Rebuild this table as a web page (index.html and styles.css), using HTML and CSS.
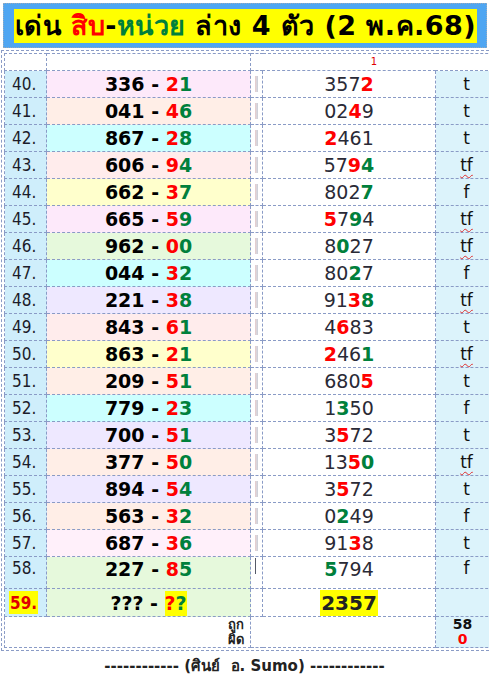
FILE: index.html
```html
<!DOCTYPE html>
<html lang="th">
<head>
<meta charset="utf-8">
<title>เด่น สิบ-หน่วย ล่าง 4 ตัว</title>
<link rel="stylesheet" href="styles.css">
</head>
<body>
<div class="page">
  <header class="banner">
    <h1 class="title">เด่น <span class="r">สิบ</span>-<span class="g">หน่วย</span> ล่าง 4 ตัว (2 พ.ค.68)</h1>
  </header>
  <div class="frame">
    <table class="grid">
      <colgroup><col class="c-no"><col class="c-pair"><col class="c-sep"><col class="c-res"><col class="c-tf"></colgroup>
      <tr class="head"><td></td><td></td><td colspan="3" class="mark">1</td></tr>
      <tr><td class="no">40.</td><td class="pair bg-pink">336 - <b class="r">2</b><b class="g">1</b></td><td class="sep"><i class="bar"></i></td><td class="res">357<b class="r">2</b></td><td class="tf">t</td></tr>
      <tr><td class="no">41.</td><td class="pair bg-peach">041 - <b class="r">4</b><b class="g">6</b></td><td class="sep"><i class="bar"></i></td><td class="res">02<b class="r">4</b>9</td><td class="tf">t</td></tr>
      <tr><td class="no">42.</td><td class="pair bg-cyan">867 - <b class="r">2</b><b class="g">8</b></td><td class="sep"><i class="bar"></i></td><td class="res"><b class="r">2</b>461</td><td class="tf">t</td></tr>
      <tr><td class="no">43.</td><td class="pair bg-rose">606 - <b class="r">9</b><b class="g">4</b></td><td class="sep"><i class="bar"></i></td><td class="res">57<b class="r">9</b><b class="g">4</b></td><td class="tf"><u>tf</u></td></tr>
      <tr><td class="no">44.</td><td class="pair bg-yellow">662 - <b class="r">3</b><b class="g">7</b></td><td class="sep"><i class="bar"></i></td><td class="res">802<b class="g">7</b></td><td class="tf">f</td></tr>
      <tr><td class="no">45.</td><td class="pair bg-pink">665 - <b class="r">5</b><b class="g">9</b></td><td class="sep"><i class="bar"></i></td><td class="res"><b class="r">5</b>7<b class="g">9</b>4</td><td class="tf"><u>tf</u></td></tr>
      <tr><td class="no">46.</td><td class="pair bg-green">962 - <b class="r">0</b><b class="g">0</b></td><td class="sep"><i class="bar"></i></td><td class="res">8<b class="g">0</b>27</td><td class="tf"><u>tf</u></td></tr>
      <tr><td class="no">47.</td><td class="pair bg-cyan">044 - <b class="r">3</b><b class="g">2</b></td><td class="sep"><i class="bar"></i></td><td class="res">80<b class="g">2</b>7</td><td class="tf">f</td></tr>
      <tr><td class="no">48.</td><td class="pair bg-lav">221 - <b class="r">3</b><b class="g">8</b></td><td class="sep"><i class="bar"></i></td><td class="res">91<b class="r">3</b><b class="g">8</b></td><td class="tf"><u>tf</u></td></tr>
      <tr><td class="no">49.</td><td class="pair bg-rose">843 - <b class="r">6</b><b class="g">1</b></td><td class="sep"><i class="bar"></i></td><td class="res">4<b class="r">6</b>83</td><td class="tf">t</td></tr>
      <tr><td class="no">50.</td><td class="pair bg-yellow">863 - <b class="r">2</b><b class="g">1</b></td><td class="sep"><i class="bar"></i></td><td class="res"><b class="r">2</b>46<b class="g">1</b></td><td class="tf"><u>tf</u></td></tr>
      <tr><td class="no">51.</td><td class="pair bg-peach">209 - <b class="r">5</b><b class="g">1</b></td><td class="sep"><i class="bar"></i></td><td class="res">680<b class="r">5</b></td><td class="tf">t</td></tr>
      <tr><td class="no">52.</td><td class="pair bg-cyan">779 - <b class="r">2</b><b class="g">3</b></td><td class="sep"><i class="bar"></i></td><td class="res">1<b class="g">3</b>50</td><td class="tf">f</td></tr>
      <tr><td class="no">53.</td><td class="pair bg-lav">700 - <b class="r">5</b><b class="g">1</b></td><td class="sep"><i class="bar"></i></td><td class="res">3<b class="r">5</b>72</td><td class="tf">t</td></tr>
      <tr><td class="no">54.</td><td class="pair bg-peach">377 - <b class="r">5</b><b class="g">0</b></td><td class="sep"><i class="bar"></i></td><td class="res">13<b class="r">5</b><b class="g">0</b></td><td class="tf"><u>tf</u></td></tr>
      <tr><td class="no">55.</td><td class="pair bg-lav">894 - <b class="r">5</b><b class="g">4</b></td><td class="sep"><i class="bar"></i></td><td class="res">3<b class="r">5</b>72</td><td class="tf">t</td></tr>
      <tr><td class="no">56.</td><td class="pair bg-peach">563 - <b class="r">3</b><b class="g">2</b></td><td class="sep"><i class="bar"></i></td><td class="res">0<b class="g">2</b>49</td><td class="tf">f</td></tr>
      <tr><td class="no">57.</td><td class="pair bg-blush">687 - <b class="r">3</b><b class="g">6</b></td><td class="sep"><i class="bar"></i></td><td class="res">91<b class="r">3</b>8</td><td class="tf">t</td></tr>
      <tr class="tall"><td class="no">58.</td><td class="pair bg-green">227 - <b class="r">8</b><b class="g">5</b></td><td class="sep"><i class="bar dark"></i></td><td class="res"><b class="g">5</b>794</td><td class="tf">f</td></tr>
      <tr class="next"><td class="no"><span class="hl no-hl">59.</span></td><td class="pair bg-green">??? - <span class="hl"><b class="r">?</b><b class="g">?</b></span></td><td class="sep"></td><td class="res"><b class="hl res-hl">2357</b></td><td class="tf"></td></tr>
      <tr class="sum"><td colspan="2" class="sum-label">ถูก<br>ผิด</td><td colspan="2" class="sum-gap"></td><td class="tf sum-val">58<br><span class="r">0</span></td></tr>
    </table>
  </div>
  <p class="credit">------------ (ศินย์&nbsp; อ. Sumo) ------------</p>
</div>
</body>
</html>
```

FILE: styles.css
```css
html, body {
  margin: 0;
  padding: 0;
  background: #ffffff;
  overflow: hidden;
}

body {
  font-family: "DejaVu Sans", "Noto Sans", sans-serif;
  color: #222;
}

.page {
  width: 489px;
  height: 679px;
  overflow: hidden;
}

.banner {
  margin: 3px 2px 0 3px;
  height: 45px;
  box-sizing: border-box;
  background: #4fa6f2;
  border: 1px dotted #9aaabb;
  padding: 5px 9px 4px 10px;
}

.title {
  margin: 0;
  height: 34px;
  line-height: 34px;
  background: #ffff00;
  color: #000;
  text-align: center;
  white-space: nowrap;
  font-family: "DejaVu Sans", sans-serif;
  font-size: 27px;
  letter-spacing: 0.45px;
  font-weight: bold;
}

.r { color: #ff0000; }
.g { color: #00803c; }

.frame {
  margin: 2px 0 0 1px;
  width: 500px;
  border-top: 1px dashed #8a9bc6;
  border-bottom: 1px dashed #8a9bc6;
  border-left: 1px dashed #8a9bc6;
  padding: 2px 0 2px 2px;
}

.grid {
  border-collapse: collapse;
  table-layout: fixed;
  width: 493px;
}

.c-no { width: 42px; }
.c-pair { width: 204px; }
.c-sep { width: 12px; }
.c-res { width: 173px; }
.c-tf { width: 62px; }

.grid td {
  border: 1px dashed #8a9bc6;
  padding: 0;
  height: 26px;
  white-space: nowrap;
}

.grid .head td {
  height: 13px;
  line-height: 10px;
}

.grid .mark {
  text-align: center;
  vertical-align: top;
  font-size: 10px;
  line-height: 10px;
  color: #e00000;
  padding-top: 3px;
}

.no {
  background: #cfeefb;
  font-family: "DejaVu Sans Condensed", "DejaVu Sans", sans-serif;
  font-size: 17px;
  color: #1c1c2a;
  padding-left: 7px !important;
}

.pair {
  text-align: center;
  font-weight: bold;
  font-size: 19px;
  color: #000;
}

.pair b { font-weight: bold; }

.bg-pink { background: #fde9fa; }
.bg-peach { background: #ffeee7; }
.bg-cyan { background: #ccffff; }
.bg-rose { background: #ffecec; }
.bg-yellow { background: #ffffcc; }
.bg-green { background: #e6f9dc; }
.bg-lav { background: #eee8ff; }
.bg-blush { background: #fff0fa; }

.sep {
  background: #ffffff;
  padding-left: 4px !important;
}

.bar {
  display: block;
  width: 3px;
  height: 16px;
  background: linear-gradient(to right, #e9caca, #d8d8de 60%, #c8cad4);
}

.bar.dark {
  width: 1px;
  background: #555a66;
}

.res {
  text-align: center;
  font-size: 19px;
  color: #2a2a36;
}

.res b { font-weight: bold; }

.tf {
  background: #dcf3fb;
  text-align: center;
  font-size: 17px;
  color: #111;
}

.tf u {
  text-decoration: underline wavy #e03030;
  text-decoration-thickness: 1px;
  text-underline-offset: 3px;
}

.grid .tall td {
  height: 30px;
  vertical-align: top;
  padding-top: 1px;
}

.grid .next td {
  height: 27px;
}

.hl {
  background: #ffff00;
  padding: 1px 0 2px;
}

.no-hl {
  font-weight: bold;
  color: #e00000;
  margin-left: -3px;
  padding: 2px 1px 1px;
}

.res-hl {
  font-weight: bold;
  color: #222;
  font-size: 20px;
  padding: 1px 1px;
}

.grid .sum td {
  height: 30px;
}

.sum-label {
  text-align: right;
  padding-right: 6px !important;
  font-size: 13px;
  font-weight: bold;
  line-height: 15px;
  background: #ffffff;
}

.sum-gap {
  background: #ffffff;
}

.sum-val {
  font-size: 14px;
  font-weight: bold;
  line-height: 15px;
  padding-right: 8px !important;
}

.credit {
  margin: 5px 0 0;
  text-align: center;
  font-family: "DejaVu Sans", sans-serif;
  font-size: 15px;
  font-weight: bold;
  line-height: 20px;
  color: #222;
}
```
